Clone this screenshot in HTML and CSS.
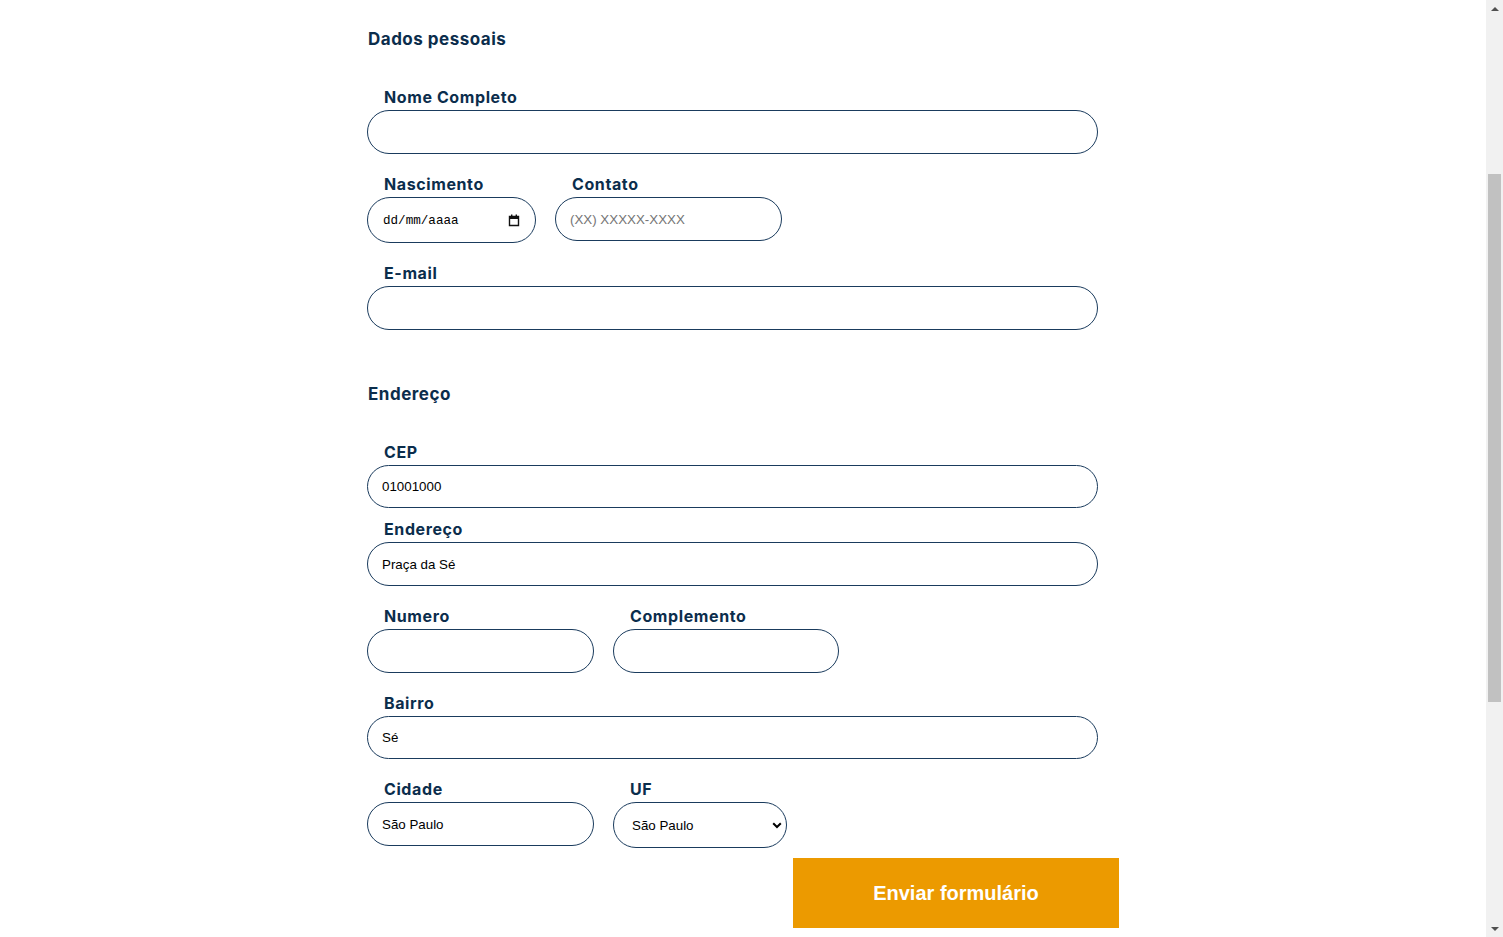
FILE: index.html
```html
<!DOCTYPE html>
<html lang="pt-BR">
<head>
<meta charset="utf-8">
<title>Formulário</title>
<link rel="stylesheet" href="styles.css">
</head>
<body>
<div class="viewport">
  <main class="content">
    <form class="form">
      <h2 class="section-title">Dados pessoais</h2>
      <div class="group">
        <label class="label">Nome Completo</label>
        <input class="field" type="text">
      </div>
      <div class="row">
        <div class="group">
          <label class="label">Nascimento</label>
          <div class="field date-field">
            <span class="date-text">dd/mm/aaaa</span>
            <svg class="cal-icon" width="12" height="13" viewBox="0 0 12 13"><path d="M1.5 2.5h9v9h-9z" fill="none" stroke="#111" stroke-width="1.4"/><rect x="1" y="2" width="10" height="3" fill="#111"/><rect x="3" y="0.5" width="1.4" height="2" fill="#111"/><rect x="7.6" y="0.5" width="1.4" height="2" fill="#111"/></svg>
          </div>
        </div>
        <div class="group">
          <label class="label">Contato</label>
          <input class="field w-contato" type="text" placeholder="(XX) XXXXX-XXXX">
        </div>
      </div>
      <div class="group">
        <label class="label">E-mail</label>
        <input class="field" type="email">
      </div>

      <h2 class="section-title section-gap">Endereço</h2>
      <div class="group tight">
        <label class="label">CEP</label>
        <input class="field h43" type="text" value="01001000">
      </div>
      <div class="group">
        <label class="label">Endereço</label>
        <input class="field" type="text" value="Praça da Sé">
      </div>
      <div class="row">
        <div class="group">
          <label class="label">Numero</label>
          <input class="field w-half" type="text">
        </div>
        <div class="group">
          <label class="label">Complemento</label>
          <input class="field w-comp" type="text">
        </div>
      </div>
      <div class="group">
        <label class="label">Bairro</label>
        <input class="field h43" type="text" value="Sé">
      </div>
      <div class="row last-row">
        <div class="group">
          <label class="label">Cidade</label>
          <input class="field w-half" type="text" value="São Paulo">
        </div>
        <div class="group">
          <label class="label">UF</label>
          <div class="select-wrap">
            <select class="field select-field">
              <option>São Paulo</option>
            </select>
            <svg class="chevron" width="10" height="7" viewBox="0 0 10 7"><path d="M1.2 1.2L5 5l3.8-3.8" fill="none" stroke="#000" stroke-width="2"/></svg>
          </div>
        </div>
      </div>
      <div class="actions">
        <button class="submit" type="button">Enviar formulário</button>
      </div>
    </form>
  </main>
  <div class="scrollbar" aria-hidden="true">
    <div class="sb-arrow sb-up"></div>
    <div class="sb-track">
      <div class="sb-thumb"></div>
    </div>
    <div class="sb-arrow sb-down"></div>
  </div>
</div>
</body>
</html>
```

FILE: styles.css
```css
* { box-sizing: border-box; }
html, body { margin: 0; padding: 0; background: #fff; overflow: hidden; }
body { font-family: "Liberation Sans", Arial, sans-serif; }

.viewport {
  display: flex;
  height: 937px;
}
.content {
  flex: 1;
  min-width: 0;
  overflow: hidden;
}

.form {
  width: 752px;
  margin: 0 auto;
  padding-top: 27px;
}

.section-title {
  margin: 0 0 36px 1px;
  font-family: Inter, "Noto Sans", sans-serif;
  font-weight: 700;
  font-size: 17px;
  line-height: 24px;
  color: #0b2d4c;
  letter-spacing: 0.5px;
}
.section-gap { margin-top: 52px; }

.group {
  display: flex;
  flex-direction: column;
  align-items: flex-start;
  margin-bottom: 20px;
}
.group.tight { margin-bottom: 11px; }

.label {
  display: block;
  padding-left: 17px;
  margin-bottom: 3px;
  font-family: Inter, "Noto Sans", sans-serif;
  font-weight: 700;
  font-size: 16px;
  line-height: 20px;
  color: #0b2d4c;
  letter-spacing: 0.6px;
}

.field {
  display: block;
  width: 731px;
  height: 44px;
  margin: 0;
  padding: 0 14px;
  border: 1px solid #1a3b5d;
  border-radius: 22px;
  background: #fff;
  font-family: "Liberation Sans", Arial, sans-serif;
  font-size: 13.33px;
  color: #000;
  outline: none;
}
.field::placeholder { color: #757575; }
.h43 { height: 43px; }

.row {
  display: flex;
  align-items: flex-start;
  gap: 19px;
}
.row .group { margin-bottom: 20px; }
.row.last-row .group { margin-bottom: 10px; }

.date-field {
  width: 169px;
  height: 46px;
  display: flex;
  align-items: center;
  justify-content: space-between;
  padding: 1px 15px 0 15px;
  border-radius: 23px;
}
.date-text {
  font-family: "Liberation Mono", "DejaVu Sans Mono", monospace;
  font-size: 12.6px;
  color: #000;
}
.cal-icon { display: block; }

.w-contato { width: 227px; }
.w-half { width: 227px; }
.w-comp { width: 226px; }

.select-wrap {
  position: relative;
  width: 174px;
}
.select-field {
  width: 174px;
  height: 46px;
  border-radius: 23px;
  padding: 0 30px 0 18px;
  appearance: none;
  -webkit-appearance: none;
}
.chevron {
  position: absolute;
  right: 5px;
  top: 20px;
  pointer-events: none;
}

.actions {
  display: flex;
  justify-content: flex-end;
}
.submit {
  width: 326px;
  height: 70px;
  border: 0;
  background: #ec9a00;
  color: #fff;
  font-family: "Liberation Sans", Arial, sans-serif;
  font-weight: 700;
  font-size: 20px;
  cursor: pointer;
}

/* imitation of the browser's scrollbar */
.scrollbar {
  width: 17px;
  flex: 0 0 17px;
  background: #f1f1f1;
  display: flex;
  flex-direction: column;
}
.sb-arrow {
  height: 17px;
  display: flex;
  align-items: center;
  justify-content: center;
}
.sb-arrow::before {
  content: "";
  width: 0;
  height: 0;
  border-left: 4px solid transparent;
  border-right: 4px solid transparent;
}
.sb-up::before { border-bottom: 4px solid #505050; }
.sb-down::before { border-top: 4px solid #505050; }
.sb-track {
  flex: 1;
  padding: 157px 2px 0 2px;
}
.sb-thumb {
  height: 528px;
  background: #c1c1c1;
}
```
